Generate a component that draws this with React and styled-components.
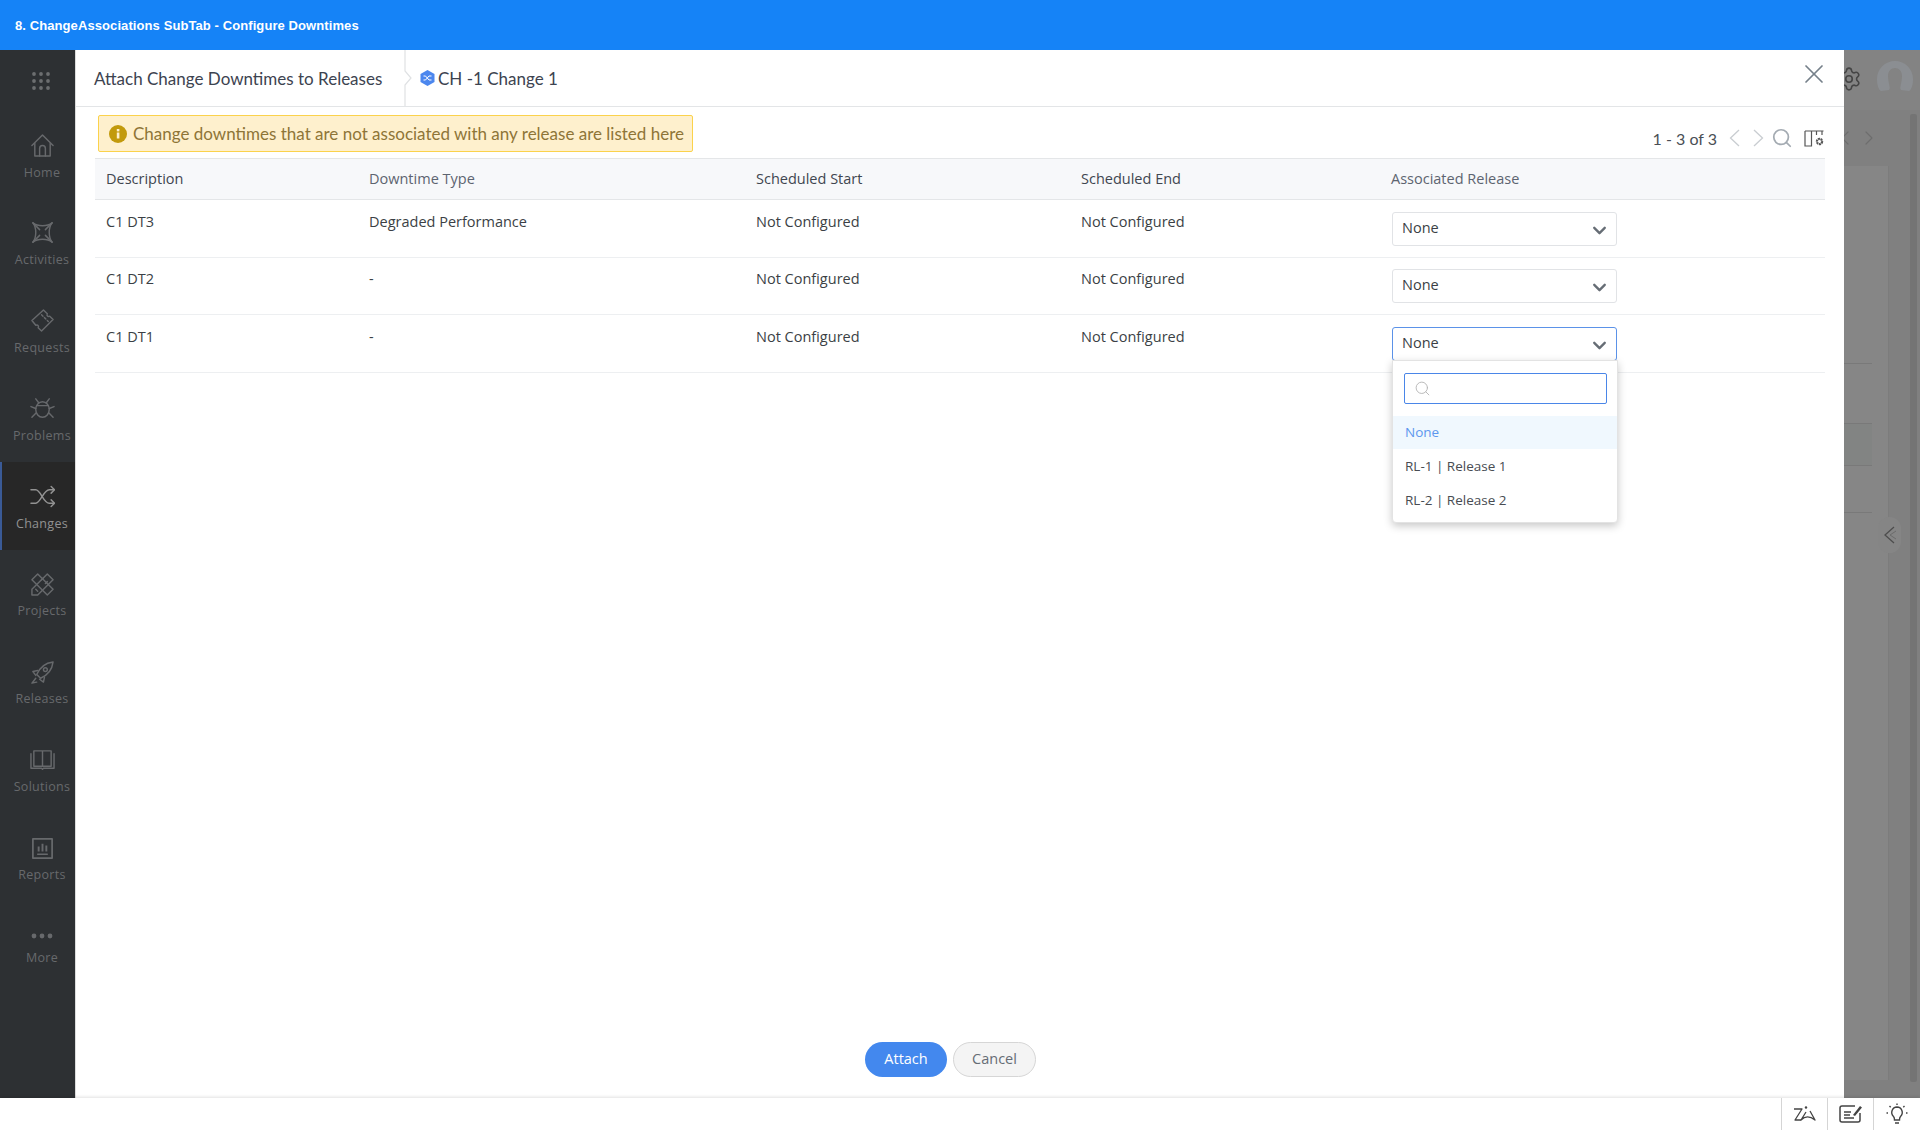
import React from 'react';
import styled, { createGlobalStyle } from 'styled-components';
import { ChevronDown, ChevronLeft, ChevronRight, Search, X, Settings } from 'lucide-react';

const Global = createGlobalStyle`
  html, body { margin: 0; padding: 0; background: #fff; }
  * { box-sizing: border-box; }
  body { font-family: "Open Sans", sans-serif; color: #3f4449; }
`;

const Page = styled.div`
  width: 1920px;
  height: 1130px;
  display: flex;
  flex-direction: column;
  overflow: hidden;
`;

const TopBar = styled.div`
  height: 50px;
  flex: none;
  background: #1583f7;
  color: #fff;
  display: flex;
  align-items: center;
  padding-left: 15px;
  font: bold 13px "Liberation Sans", sans-serif;
  letter-spacing: 0.09px;
`;

const Body = styled.div`
  flex: 1;
  display: flex;
  min-height: 0;
`;

const Sidebar = styled.nav`
  width: 75px;
  flex: none;
  background: #2d3033;
  display: flex;
  flex-direction: column;
`;

const AppsButton = styled.div`
  height: 60px;
  display: flex;
  align-items: flex-end;
  justify-content: center;
  color: #6c6e70;
  padding: 0 0 20px 7px;
`;

const NavItem = styled.div`
  height: 88px;
  flex: none;
  display: flex;
  flex-direction: column;
  align-items: center;
  padding-top: ${({ $top }) => $top || 22}px;
  padding-left: 7px;
  gap: ${({ $gap }) => $gap || 5}px;
  color: ${({ $active }) => ($active ? '#929292' : '#67696c')};
  background: ${({ $active }) => ($active ? '#272727' : 'transparent')};
  border-left: 2px solid ${({ $active }) => ($active ? '#3a5a96' : 'transparent')};
  font-size: 12.5px;
  letter-spacing: 0.3px;
  line-height: 17px;
`;

const Modal = styled.div`
  width: 1769px;
  flex: none;
  background: #fff;
  display: flex;
  flex-direction: column;
  border-left: 1px solid #dcdcdc;
`;

const ModalHeader = styled.div`
  height: 57px;
  flex: none;
  display: flex;
  align-items: center;
  border-bottom: 1px solid #e3e5e7;
  padding-left: 18px;
  color: #3d4350;
  font-family: Lato, sans-serif;
  font-size: 17px;
  position: relative;
`;

const Crumb = styled.span`
  width: 288px;
  white-space: nowrap;
`;

const CrumbDivider = styled.svg`
  width: 10px;
  height: 56px;
  margin-left: 22px;
  margin-right: 6px;
  flex: none;
`;

const ChangeTag = styled.span`
  display: flex;
  align-items: center;
  gap: 3px;
  white-space: nowrap;
`;

const CloseButton = styled.div`
  position: absolute;
  right: 14px;
  top: 8px;
  color: #76808a;
  display: flex;
`;

const Toolbar = styled.div`
  height: 51px;
  flex: none;
  display: flex;
  align-items: flex-start;
  justify-content: space-between;
  padding: 8px 10px 0 22px;
`;

const Banner = styled.div`
  height: 37px;
  width: 595px;
  display: flex;
  align-items: center;
  gap: 6px;
  padding-left: 10px;
  background: #fef0cd;
  border: 1px solid #fbd24c;
  border-radius: 2px;
  color: #8e7537;
  font-family: Lato, sans-serif;
  font-size: 17px;
  white-space: nowrap;
`;

const BannerIcon = styled.svg`
  width: 18px;
  height: 18px;
  flex: none;
`;

const Pager = styled.div`
  display: flex;
  align-items: center;
  margin-top: 11px;
  color: #4a4f55;
  font-family: Lato, sans-serif;
  font-size: 16px;
  height: 24px;
`;

const PagerCount = styled.span`
  margin-right: 5px;
  white-space: nowrap;
`;

const PagerIcon = styled.span`
  display: flex;
  width: ${({ $w }) => $w || 24}px;
  justify-content: center;
  color: ${({ $color }) => $color || '#c9cdd1'};
`;

const Table = styled.div`
  margin: 0 19px;
  flex: 1;
`;

const Row = styled.div`
  display: grid;
  grid-template-columns: 263px 387px 325px 310px 1fr;
  height: ${({ $h }) => $h}px;
  border-bottom: 1px solid #edeff1;
`;

const HeadRow = styled(Row)`
  background: #f7f8fa;
  border-top: 1px solid #e4e6e8;
  border-bottom: 1px solid #e4e6e8;
  align-items: center;
  padding-bottom: 2px;
`;

const HeadCell = styled.div`
  padding-left: 11px;
  font-size: 14.5px;
  color: ${({ $muted }) => ($muted ? '#5d6470' : '#3f4650')};
`;

const Cell = styled.div`
  padding: ${({ $top }) => $top}px 0 0 11px;
  font-size: 14.5px;
  line-height: 20px;
  color: #3b3f45;
`;

const SelectCell = styled.div`
  padding: ${({ $top }) => $top}px 0 0 12px;
  position: relative;
`;

const Select = styled.div`
  width: 225px;
  height: 34px;
  display: flex;
  align-items: center;
  justify-content: space-between;
  padding: 0 6px 3px 9px;
  border: 1px solid ${({ $open }) => ($open ? '#5b92e8' : '#e1e3e6')};
  border-radius: 3px;
  font-size: 14.5px;
  color: #3b3f45;
  background: #fff;
`;

const SelectArrow = styled(ChevronDown)`
  color: #666d75;
  margin-top: 5px;
  flex: none;
`;

const Dropdown = styled.div`
  position: absolute;
  top: 45px;
  left: 12px;
  width: 226px;
  height: 163px;
  background: #fff;
  border-radius: 0 0 4px 4px;
  border: 1px solid #e3e3e3;
  box-shadow: 0 3px 8px rgba(0, 0, 0, 0.22);
  padding-top: 12px;
  z-index: 5;
`;

const DropSearch = styled.div`
  width: 203px;
  height: 31px;
  margin: 0 0 12px 11px;
  border: 1px solid #4a86e8;
  border-radius: 2px;
  display: flex;
  align-items: center;
  padding-left: 9px;
  color: #b5b5b5;
`;

const Option = styled.div`
  height: 33px;
  display: flex;
  align-items: center;
  padding: 0 0 2px 12px;
  font-size: 13.5px;
  margin-bottom: ${({ $gap }) => $gap || 0}px;
  color: ${({ $active }) => ($active ? '#5d97ee' : '#484c52')};
  background: ${({ $active }) => ($active ? '#f0f8fe' : 'transparent')};
`;

const Footer = styled.div`
  height: 56px;
  flex: none;
  display: flex;
  justify-content: center;
  gap: 6px;
  padding-right: 20px;
`;

const PrimaryButton = styled.button`
  width: 82px;
  height: 35px;
  border: 0;
  border-radius: 18px;
  padding: 0 0 2px 1px;
  background: #4388ee;
  color: #fff;
  font: 14.5px "Open Sans", sans-serif;
`;

const GhostButton = styled.button`
  width: 83px;
  height: 35px;
  border: 1px solid #d6d6d6;
  border-radius: 18px;
  padding: 0 0 2px 1px;
  background: #f4f4f4;
  color: #666c75;
  font: 14.5px "Open Sans", sans-serif;
`;

const DimPane = styled.div`
  flex: 1;
  background: #808080;
  display: flex;
  flex-direction: column;
  overflow: hidden;
  position: relative;
`;

const DimHeader = styled.div`
  height: 60px;
  flex: none;
  background: #838383;
  display: flex;
  align-items: center;
  padding-bottom: 2px;
  color: #454545;
`;

const GearWrap = styled.span`
  display: flex;
  margin-left: -8px;
  margin-right: 15px;
`;

const Avatar = styled.svg`
  width: 36px;
  height: 36px;
  flex: none;
`;

const DimBody = styled.div`
  flex: 1;
  display: flex;
  min-height: 0;
`;

const DimMain = styled.div`
  width: 66px;
  flex: none;
  display: flex;
  flex-direction: column;
`;

const DimPager = styled.div`
  height: 56px;
  flex: none;
  display: flex;
  align-items: center;
  color: #6d6d6d;
  margin-left: -11px;
`;

const DimCard = styled.div`
  width: 45px;
  height: 914px;
  background: #868686;
  border-right: 1px solid #7c7c7c;
  display: flex;
  flex-direction: column;
`;

const DimLine = styled.div`
  width: 28px;
  height: ${({ $h }) => $h}px;
  flex: none;
  background: ${({ $tint }) => ($tint ? '#828483' : 'transparent')};
  border-bottom: 1px solid #797979;
`;

const Scrollbar = styled.div`
  width: 7px;
  height: 968px;
  margin-top: 4px;
  background: #747474;
  border-radius: 2px;
`;

const CollapseHandle = styled.div`
  position: absolute;
  left: 34px;
  top: 467px;
  width: 23px;
  height: 36px;
  border-radius: 12px;
  background: #858585;
  display: flex;
  align-items: center;
  justify-content: center;
`;

const BottomBar = styled.div`
  height: 32px;
  flex: none;
  background: #fff;
  box-shadow: 0 -1px 3px rgba(0, 0, 0, 0.12);
  display: flex;
  justify-content: flex-end;
  position: relative;
`;

const BottomCell = styled.div`
  width: ${({ $w }) => $w || 46}px;
  border-left: 1px solid #d5d5d5;
  display: flex;
  align-items: center;
  justify-content: center;
  color: #444;
`;

const IconSvg = styled.svg`
  width: ${({ $s }) => $s || 26}px;
  height: ${({ $s }) => $s || 26}px;
  flex: none;
  fill: none;
  stroke: currentColor;
  stroke-width: ${({ $sw }) => $sw || 1.5};
  stroke-linecap: round;
  stroke-linejoin: round;
`;

const DotsSvg = styled(IconSvg)`
  height: 6px;
`;

const AppsIcon = () => (
  <IconSvg viewBox="0 0 18 18" $s={18}>
    {[2, 9, 16].map((y) =>
      [2, 9, 16].map((x) => <circle key={`${x}-${y}`} cx={x} cy={y} r="1.9" fill="currentColor" stroke="none" />)
    )}
  </IconSvg>
);

const icons = {
  home: (
    <>
      <path d="M2 13 L13 2 L24 13" />
      <path d="M5 11 V24 H21 V11" />
      <path d="M10 24 V16 A3 3 0 0 1 16 16 V24" />
    </>
  ),
  activities: (
    <>
      <path d="M3 3 C8 7 18 7 23 3 C19 8 19 18 23 23 C18 19 8 19 3 23 C7 18 7 8 3 3Z" />
      <path d="M3 3 L10 10 M23 3 L16 10 M3 23 L10 16 M23 23 L16 16" />
    </>
  ),
  requests: (
    <>
      <path d="M2 13 L14 2 L18 6 C17 8 18.5 9.5 20.5 8.5 L24 12 L12 24 L8.5 20.5 C9.5 18.5 8 17 6 18 Z" />
      <path d="M12 7 L13.5 8.5 M15 10 L16.5 11.5 M18 13 L19 14" />
    </>
  ),
  problems: (
    <>
      <ellipse cx="13" cy="14" rx="7" ry="8" />
      <path d="M9 7 L6 3 M17 7 L20 3 M6 13 L1 11 M20 13 L25 11 M6 18 L2 22 M20 18 L24 22" />
      <path d="M7 10 H19" />
    </>
  ),
  changes: (
    <>
      <path d="M1 6 H6 C11 6 14 20 20 20 H25" />
      <path d="M1 20 H6 C11 20 14 6 20 6 H25" />
      <path d="M22 2.5 L25.5 6 L22 9.5 M22 16.5 L25.5 20 L22 23.5" />
    </>
  ),
  projects: (
    <>
      <path d="M8 2 L24 18 L18 24 L2 8 Z" />
      <path d="M18 2 L24 8 L8 24 L2 24 L2 18 Z" />
      <path d="M12 8 L14 6 M16 12 L18 10 M8 20 L6 18" />
    </>
  ),
  releases: (
    <>
      <path d="M24 2 C16 3 10 8 7 15 L11 19 C18 16 23 10 24 2 Z" />
      <path d="M8 11 L3 12 L6 16 M15 18 L14 23 L10 20" />
      <circle cx="16" cy="10" r="2" />
      <path d="M6 19 L2 24 L7 23" />
    </>
  ),
  solutions: (
    <>
      <path d="M4 3 H13 V19 H4 Z M13 3 H22 V19 H13 Z" />
      <path d="M1 6 V21 H12 L13 22 L14 21 H25 V6" />
    </>
  ),
  reports: (
    <>
      <path d="M3 3 H23 V23 H3 Z" strokeWidth="1.8" />
      <path d="M9 16 V11 M13 16 V8 M17 16 V10" strokeWidth="2" strokeLinecap="butt" />
      <path d="M8 19 H18" />
    </>
  ),
};

const navItems = [
  { label: 'Home', icon: 'home', top: 23, gap: 6 },
  { label: 'Activities', icon: 'activities', gap: 6 },
  { label: 'Requests', icon: 'requests', gap: 6 },
  { label: 'Problems', icon: 'problems', gap: 6 },
  { label: 'Changes', icon: 'changes', active: true, gap: 6 },
  { label: 'Projects', icon: 'projects' },
  { label: 'Releases', icon: 'releases' },
  { label: 'Solutions', icon: 'solutions' },
  { label: 'Reports', icon: 'reports' },
];

const rows = [
  { name: 'C1 DT3', type: 'Degraded Performance', h: 58, text: 12, top: 12 },
  { name: 'C1 DT2', type: '-', h: 57, text: 11, top: 11 },
  { name: 'C1 DT1', type: '-', h: 58, text: 12, top: 12, open: true },
];

const Chevron = ({ left }) => (
  <svg width="11" height="18" viewBox="0 0 11 18" fill="none" stroke="currentColor" strokeWidth="1.3">
    <path d={left ? 'M10 1 L1.5 9 L10 17' : 'M1 1 L9.5 9 L1 17'} />
  </svg>
);

export default function App() {
  return (
    <Page>
      <Global />
      <TopBar>8. ChangeAssociations SubTab - Configure Downtimes</TopBar>
      <Body>
        <Sidebar>
          <AppsButton><AppsIcon /></AppsButton>
          {navItems.map((item) => (
            <NavItem key={item.label} $active={item.active} $top={item.top} $gap={item.gap}>
              <IconSvg viewBox="0 0 26 26" $s={25}>{icons[item.icon]}</IconSvg>
              <span>{item.label}</span>
            </NavItem>
          ))}
          <NavItem $top={31} $gap={10}>
            <DotsSvg viewBox="0 0 24 6" $s={24}>
              {[4, 12, 20].map((x) => <circle key={x} cx={x} cy="3" r="2.4" fill="currentColor" stroke="none" />)}
            </DotsSvg>
            <span>More</span>
          </NavItem>
        </Sidebar>

        <Modal>
          <ModalHeader>
            <Crumb>Attach Change Downtimes to Releases</Crumb>
            <CrumbDivider viewBox="0 0 10 56">
              <path d="M1 0 V21 L7 28 L1 35 V56" fill="none" stroke="#dfe1e3" strokeWidth="1.2" />
            </CrumbDivider>
            <ChangeTag>
              <svg width="15" height="16" viewBox="0 0 15 16">
                <path d="M7.5 0 L14.5 4 V12 L7.5 16 L0.5 12 V4 Z" fill="#4c87ee" />
                <path d="M3.5 6 H5.5 L9 10 H11.5 M3.5 10 H5.5 L9 6 H11.5" stroke="#fff" strokeWidth="1" fill="none" />
              </svg>
              CH -1 Change 1
            </ChangeTag>
            <CloseButton><X size={32} strokeWidth={1.3} /></CloseButton>
          </ModalHeader>

          <Toolbar>
            <Banner>
              <BannerIcon viewBox="0 0 18 18">
                <circle cx="9" cy="9" r="9" fill="#c29a0c" />
                <rect x="7.8" y="7.5" width="2.6" height="6" fill="#fef0cd" />
                <rect x="7.8" y="4" width="2.6" height="2.4" fill="#fef0cd" />
              </BannerIcon>
              Change downtimes that are not associated with any release are listed here
            </Banner>
            <Pager>
              <PagerCount>1 - 3 of 3</PagerCount>
              <PagerIcon><Chevron left /></PagerIcon>
              <PagerIcon><Chevron /></PagerIcon>
              <PagerIcon $color="#a4abb2"><Search size={22} strokeWidth={1.9} /></PagerIcon>
              <PagerIcon $w={40} $color="#555">
                <svg width="20" height="17" viewBox="0 0 20 17" fill="none" stroke="currentColor" strokeWidth="1.2">
                  <path d="M1 1 H19.5 M1 1 V16 H7.5 V1 M12.5 1 V5 M18 1 V5" />
                  <circle cx="15.5" cy="11.5" r="2.6" strokeWidth="2.2" strokeDasharray="2 0.6" />
                </svg>
              </PagerIcon>
            </Pager>
          </Toolbar>

          <Table>
            <HeadRow $h={42}>
              <HeadCell>Description</HeadCell>
              <HeadCell $muted>Downtime Type</HeadCell>
              <HeadCell>Scheduled Start</HeadCell>
              <HeadCell>Scheduled End</HeadCell>
              <HeadCell $muted>Associated Release</HeadCell>
            </HeadRow>
            {rows.map((row) => (
              <Row key={row.name} $h={row.h}>
                <Cell $top={row.text}>{row.name}</Cell>
                <Cell $top={row.text}>{row.type}</Cell>
                <Cell $top={row.text}>Not Configured</Cell>
                <Cell $top={row.text}>Not Configured</Cell>
                <SelectCell $top={row.top}>
                  <Select $open={row.open}>
                    None
                    <SelectArrow size={21} strokeWidth={2.7} />
                  </Select>
                  {row.open && (
                    <Dropdown>
                      <DropSearch><Search size={17} strokeWidth={1.3} /></DropSearch>
                      <Option $active $gap={1}>None</Option>
                      <Option $gap={1}>RL-1 | Release 1</Option>
                      <Option>RL-2 | Release 2</Option>
                    </Dropdown>
                  )}
                </SelectCell>
              </Row>
            ))}
          </Table>

          <Footer>
            <PrimaryButton>Attach</PrimaryButton>
            <GhostButton>Cancel</GhostButton>
          </Footer>
        </Modal>

        <DimPane>
          <DimHeader>
            <GearWrap><Settings size={26} strokeWidth={1.5} /></GearWrap>
            <Avatar viewBox="0 0 36 36">
              <path d="M18 0 C8 0 0 8 0 18 C0 25 2 29 4 30 L12 29 C14 27 11 22 11 15 C11 10 14 7 18 7 C22 7 25 10 25 15 C25 22 22 27 24 29 L32 30 C34 29 36 25 36 18 C36 8 28 0 18 0Z" fill="#8b8e92" />
            </Avatar>
          </DimHeader>
          <DimBody>
            <DimMain>
              <DimPager>
                <ChevronLeft size={24} strokeWidth={1.2} />
                <ChevronRight size={24} strokeWidth={1.2} />
              </DimPager>
              <DimCard>
                <DimLine $h={198} />
                <DimLine $h={60} />
                <DimLine $h={42} $tint />
                <DimLine $h={47} />
              </DimCard>
            </DimMain>
            <Scrollbar />
          </DimBody>
          <CollapseHandle>
            <svg width="14" height="20" viewBox="0 0 14 20" fill="none">
              <path d="M11 2 L2 10 L11 18" stroke="#4d4d4d" strokeWidth="1.3" />
              <path d="M13 6 L7 10 L13 14" stroke="#6b6b6b" strokeWidth="1" />
            </svg>
          </CollapseHandle>
        </DimPane>
      </Body>

      <BottomBar>
        <BottomCell>
          <svg width="24" height="18" viewBox="0 0 24 18" fill="none" stroke="currentColor" strokeWidth="1.3" strokeLinejoin="round">
            <path d="M1 4 H9 L2 15 H8" />
            <circle cx="13" cy="2.5" r="1.2" fill="currentColor" stroke="none" />
            <path d="M13 7 L8 15 C12 11 17 11 22 15 L17 6" />
          </svg>
        </BottomCell>
        <BottomCell>
          <svg width="24" height="20" viewBox="0 0 24 20" fill="none" stroke="currentColor" strokeWidth="1.5">
            <path d="M16 2 H3 Q1 2 1 4 V16 Q1 18 3 18 H19 Q21 18 21 16 V9" />
            <path d="M5 8 H12 M5 11 H11 M5 14 H15" />
            <path d="M14 11 L21 2 L23 3.5 L16 12 Z" fill="currentColor" stroke="none" />
          </svg>
        </BottomCell>
        <BottomCell $w={47}>
          <svg width="22" height="22" viewBox="0 0 22 22" fill="none" stroke="currentColor" strokeWidth="1.4">
            <path d="M11 4 A5.5 5.5 0 0 0 7.5 13.5 C8.5 14.5 8.5 16 8.5 17 H13.5 C13.5 16 13.5 14.5 14.5 13.5 A5.5 5.5 0 0 0 11 4 Z" />
            <path d="M9 20 H13 M11 0.5 V2 M3.5 3 L4.7 4.2 M18.5 3 L17.3 4.2 M0.5 10 H2 M20 10 H21.5" />
          </svg>
        </BottomCell>
      </BottomBar>
    </Page>
  );
}
